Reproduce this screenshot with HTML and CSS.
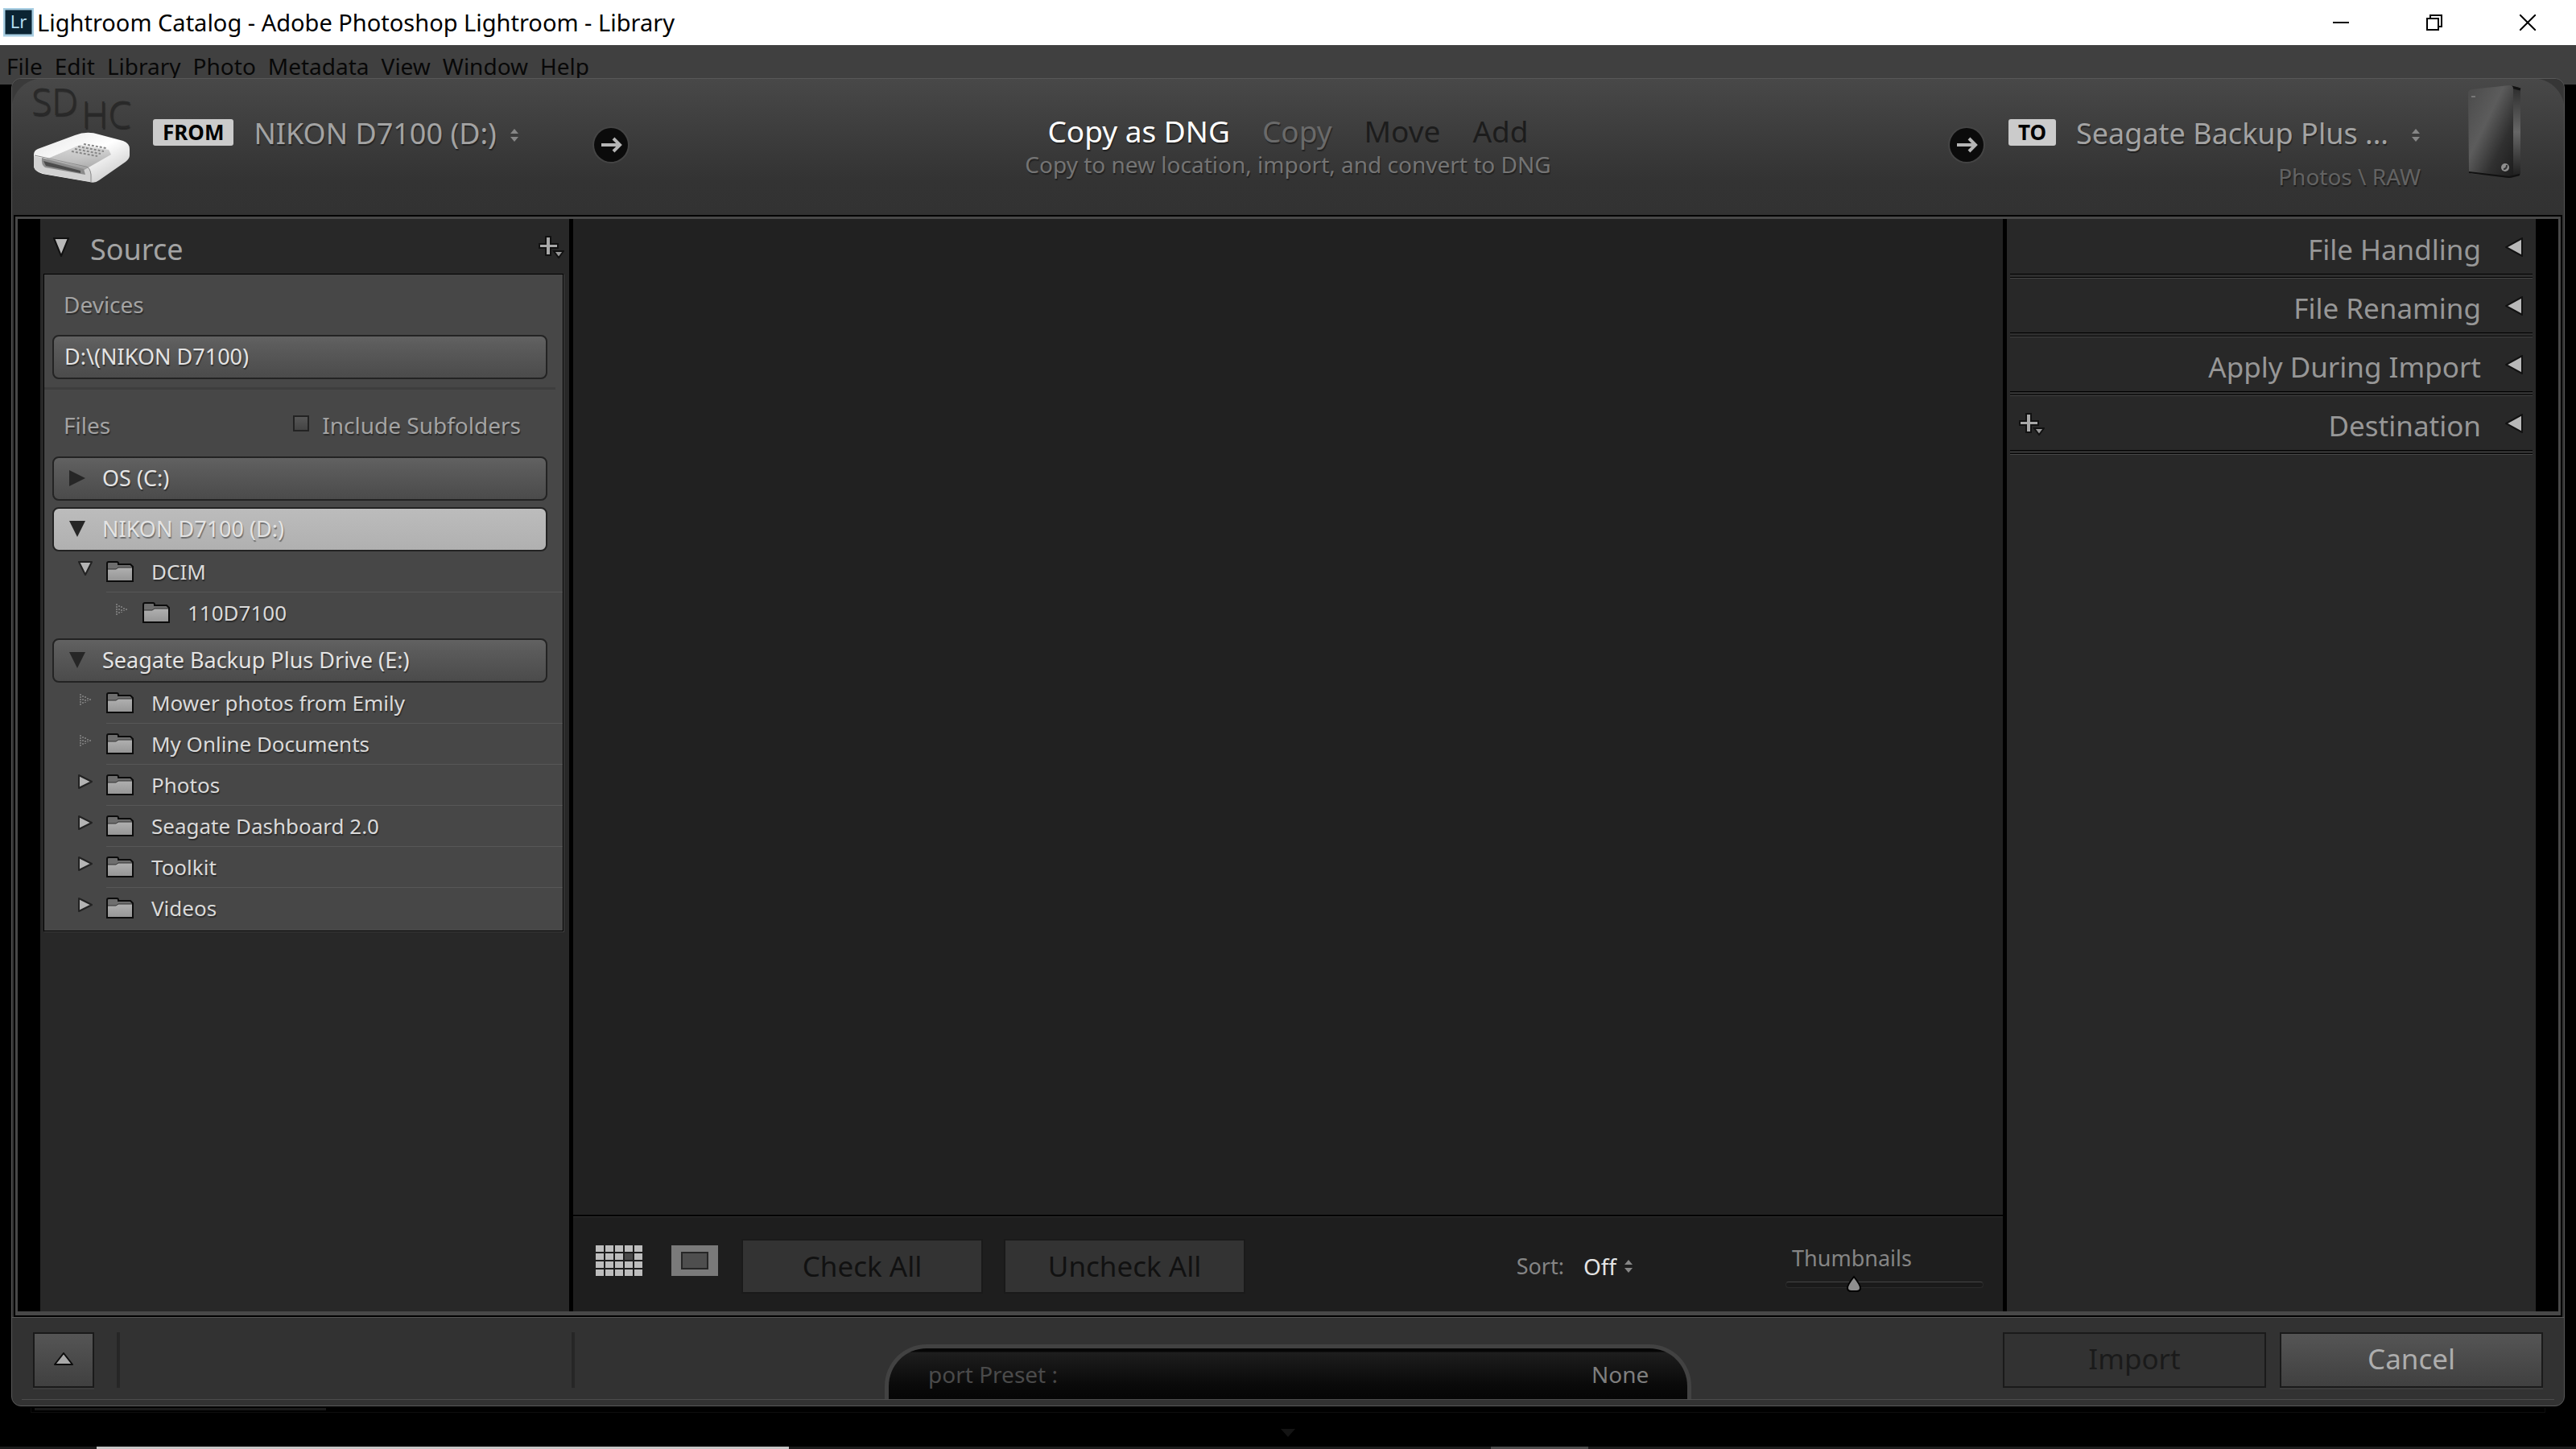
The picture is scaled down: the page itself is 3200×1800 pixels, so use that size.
FILE: index.html
```html
<!DOCTYPE html>
<html lang="en">
<head>
    <meta charset="UTF-8">
    <meta name="viewport" content="width=device-width, initial-scale=1.0">
    <title>Lightroom Catalog - Adobe Photoshop Lightroom - Library</title>
    <link rel="stylesheet" href="styles.css">
</head>
<body>
    <!-- shared icons -->
    <svg class="sprite" width="0" height="0" aria-hidden="true">
        <defs>
            <linearGradient id="folder-fill" x1="0" y1="0" x2="0" y2="1">
                <stop offset="0" stop-color="#b0b0b0"/>
                <stop offset="1" stop-color="#969696"/>
            </linearGradient>
        </defs>
        <symbol id="icon-folder" viewBox="0 0 34 26">
            <path d="M1 25V3q0-2 2-2h10q2 0 2 2v1h15l3 3v18z" fill="#6e6e6e" stroke="#0c0c0c" stroke-width="2"/>
            <path d="M2 24V10h10l3-2h17v16z" fill="url(#folder-fill)"/>
            <path d="M2 10h10l3-2h17" fill="none" stroke="#333" stroke-width="1"/>
        </symbol>
        <symbol id="icon-open" viewBox="0 0 18 18">
            <path d="M1 1h16L9 17z" fill="#b4b4b4" stroke="#222" stroke-width="2" stroke-linejoin="round"/>
        </symbol>
        <symbol id="icon-closed" viewBox="0 0 18 18">
            <path d="M1 1v16l16-8z" fill="#b4b4b4" stroke="#222" stroke-width="2" stroke-linejoin="round"/>
        </symbol>
        <symbol id="icon-empty" viewBox="0 0 18 18">
            <path d="M3 2v14M6 4v2M6 8v2M6 12v2M9 5v2M9 9v4M12 7v4M15 8v2" stroke="#777" stroke-width="2" stroke-dasharray="2 1"/>
        </symbol>
        <symbol id="icon-add" viewBox="0 0 32 28">
            <path d="M9 1h6v9h9v5h-9v9H9v-9H1v-5h8z" fill="#a8a8a8" stroke="#111" stroke-width="2"/>
            <path d="M19 19h12l-6 8z" fill="#989898" stroke="#111" stroke-width="2"/>
        </symbol>
        <symbol id="icon-updown" viewBox="0 0 12 18">
            <path d="M6 1l5 6H1zM6 17l5-6H1z" fill="#868686"/>
        </symbol>
        <symbol id="icon-next" viewBox="0 0 48 48">
            <circle cx="24" cy="24" r="23" fill="#444"/>
            <circle cx="24" cy="24" r="21" fill="#0b0b0b"/>
            <path d="M12 24h22M27 16l8 8-8 8" fill="none" stroke="#b5b5b5" stroke-width="4"/>
        </symbol>
    </svg>

    <header class="titlebar">
        <svg class="app-logo" viewBox="0 0 38 36" aria-hidden="true">
            <rect x="1" y="1" width="36" height="33" fill="#0b2433" stroke="#a9cfe3" stroke-width="3"/>
            <text class="app-logo-text" x="19" y="25" text-anchor="middle">Lr</text>
        </svg>
        <h1 class="title">Lightroom Catalog - Adobe Photoshop Lightroom - Library</h1>
        <div class="window-controls">
            <button type="button" aria-label="Minimize">
                <svg viewBox="0 0 20 20"><path d="M0 10h20" stroke="#000" stroke-width="2"/></svg>
            </button>
            <button type="button" aria-label="Restore">
                <svg viewBox="0 0 20 20"><path d="M1 5h14v14H1zM5 5V1h14v14h-4" fill="none" stroke="#000" stroke-width="2"/></svg>
            </button>
            <button type="button" aria-label="Close">
                <svg viewBox="0 0 20 20"><path d="M0 0l20 20M20 0L0 20" stroke="#000" stroke-width="2"/></svg>
            </button>
        </div>
    </header>

    <nav class="menubar">
        <a href="#">File</a>
        <a href="#">Edit</a>
        <a href="#">Library</a>
        <a href="#">Photo</a>
        <a href="#">Metadata</a>
        <a href="#">View</a>
        <a href="#">Window</a>
        <a href="#">Help</a>
    </nav>

    <main class="dialog">
        <section class="import-header">
            <div class="import-from">
                <svg class="card-icon" viewBox="0 0 121 121" aria-hidden="true">
                    <defs>
                        <linearGradient id="card-top" x1="0" y1="0" x2="1" y2="1">
                            <stop offset="0" stop-color="#e6e6e6"/>
                            <stop offset="0.5" stop-color="#ffffff"/>
                            <stop offset="1" stop-color="#bdbdbd"/>
                        </linearGradient>
                        <linearGradient id="card-face" x1="0" y1="0" x2="0" y2="1">
                            <stop offset="0" stop-color="#c4c4c4"/>
                            <stop offset="1" stop-color="#7c7c7c"/>
                        </linearGradient>
                    </defs>
                    <text class="card-text" x="-2" y="37">SD</text>
                    <text class="card-text" x="60" y="53">HC</text>
                    <path d="M1 86q0-5 5-7l46-17q15-6 30-1l30 8q8 3 8 10v8q0 4-5 8l-33 23q-5 4-12 2L12 110q-10-3-11-9z" fill="url(#card-top)"/>
                    <path d="M1 88l66 14q6 2 7 18l-8-1-52-9q-12-3-13-9z" fill="#d2d2d2"/>
                    <path d="M2 87l64 14q5 1 6 10v9" fill="none" stroke="#8d8d8d" stroke-width="1"/>
                    <path d="M16 92l42-18 36 6 3 6-35 20-45-12z" fill="url(#card-face)" opacity="0.6"/>
                    <path d="M11 90l52 14 2 7-50-9q-5-3-4-12z" fill="#8b8b8b"/>
                    <path d="M13 94l46 12v3l-43-9z" fill="#4c4c4c"/>
                    <path d="M56 76l32 6M52 79l32 6M48 82l32 6M63 73l28 5" stroke="#888" stroke-width="2" stroke-dasharray="3 2"/>
                </svg>
                <label class="badge" for="source-drive">FROM</label>
                <select id="source-drive" class="drive-select">
                    <option>NIKON D7100 (D:)</option>
                </select>
                <svg class="updown" aria-hidden="true"><use href="#icon-updown"/></svg>
                <svg class="next" aria-hidden="true"><use href="#icon-next"/></svg>
            </div>

            <div class="import-mode">
                <div class="mode-tabs">
                    <button type="button" class="mode active">Copy as DNG</button>
                    <button type="button" class="mode">Copy</button>
                    <button type="button" class="mode" disabled>Move</button>
                    <button type="button" class="mode" disabled>Add</button>
                </div>
                <p class="mode-hint">Copy to new location, import, and convert to DNG</p>
            </div>

            <div class="import-to">
                <svg class="next" aria-hidden="true"><use href="#icon-next"/></svg>
                <label class="badge" for="target-drive">TO</label>
                <div class="target">
                    <div class="target-drive">
                        <select id="target-drive" class="drive-select">
                            <option>Seagate Backup Plus ...</option>
                        </select>
                        <svg class="updown" aria-hidden="true"><use href="#icon-updown"/></svg>
                    </div>
                    <p class="target-path">Photos \ RAW</p>
                </div>
                <svg class="disk-icon" viewBox="0 0 68 116" aria-hidden="true">
                    <defs>
                        <linearGradient id="disk-front" x1="0" y1="0" x2="1" y2="1">
                            <stop offset="0" stop-color="#4a4a4a"/>
                            <stop offset="0.4" stop-color="#5c5c5c"/>
                            <stop offset="0.7" stop-color="#303030"/>
                            <stop offset="1" stop-color="#1c1c1c"/>
                        </linearGradient>
                        <linearGradient id="disk-side" x1="0" y1="0" x2="0" y2="1">
                            <stop offset="0" stop-color="#2c2c2c"/>
                            <stop offset="0.5" stop-color="#666"/>
                            <stop offset="1" stop-color="#1c1c1c"/>
                        </linearGradient>
                    </defs>
                    <path d="M52 1l10 1q4 1 4 4v103q0 3-4 4l-8 2z" fill="url(#disk-side)"/>
                    <path d="M55 2l11 3" stroke="#111" stroke-width="3"/>
                    <path d="M1 9q0-3 4-4l47-5q5 0 5 4v107q0 4-5 4l-46-5q-4-1-4-4z" fill="url(#disk-front)"/>
                    <path d="M2 108l50 6 13-3" fill="none" stroke="#111" stroke-width="2"/>
                    <circle cx="47" cy="102" r="5" fill="#8e8e8e"/>
                    <path d="M45 104q4 0 4-5" fill="none" stroke="#333" stroke-width="2"/>
                    <path d="M5 14h5" stroke="#777" stroke-width="2"/>
                </svg>
            </div>
        </section>

        <div class="workspace">
            <aside class="panel source-panel">
                <div class="panel-title">
                    <svg class="panel-arrow" viewBox="0 0 20 24" aria-hidden="true"><path d="M1 1h18l-9 22z" fill="#b8b8b8" stroke="#111" stroke-width="2"/></svg>
                    <h2>Source</h2>
                    <button type="button" class="add-button" aria-label="Add source"><svg><use href="#icon-add"/></svg></button>
                </div>
                <div class="source-body">
                    <h3 class="group-label">Devices</h3>
                    <button type="button" class="drive">D:\(NIKON D7100)</button>
                    <hr class="divider">
                    <div class="files-head">
                        <h3>Files</h3>
                        <label class="subfolders"><input type="checkbox">Include Subfolders</label>
                    </div>
                    <button type="button" class="drive">
                        <svg class="drive-arrow" viewBox="0 0 20 20"><path d="M0 0v20l20-10z" fill="#262626"/></svg>OS (C:)
                    </button>
                    <button type="button" class="drive selected">
                        <svg class="drive-arrow" viewBox="0 0 20 20"><path d="M0 0h20L10 20z" fill="#262626"/></svg>NIKON D7100 (D:)
                    </button>
                    <ul class="folders">
                        <li><svg class="twist"><use href="#icon-open"/></svg><span class="folder"><svg><use href="#icon-folder"/></svg>DCIM</span></li>
                        <li class="nested"><svg class="twist"><use href="#icon-empty"/></svg><span class="folder"><svg><use href="#icon-folder"/></svg>110D7100</span></li>
                    </ul>
                    <button type="button" class="drive">
                        <svg class="drive-arrow" viewBox="0 0 20 20"><path d="M0 0h20L10 20z" fill="#262626"/></svg>Seagate Backup Plus Drive (E:)
                    </button>
                    <ul class="folders">
                        <li><svg class="twist"><use href="#icon-empty"/></svg><span class="folder"><svg><use href="#icon-folder"/></svg>Mower photos from Emily</span></li>
                        <li><svg class="twist"><use href="#icon-empty"/></svg><span class="folder"><svg><use href="#icon-folder"/></svg>My Online Documents</span></li>
                        <li><svg class="twist"><use href="#icon-closed"/></svg><span class="folder"><svg><use href="#icon-folder"/></svg>Photos</span></li>
                        <li><svg class="twist"><use href="#icon-closed"/></svg><span class="folder"><svg><use href="#icon-folder"/></svg>Seagate Dashboard 2.0</span></li>
                        <li><svg class="twist"><use href="#icon-closed"/></svg><span class="folder"><svg><use href="#icon-folder"/></svg>Toolkit</span></li>
                        <li><svg class="twist"><use href="#icon-closed"/></svg><span class="folder"><svg><use href="#icon-folder"/></svg>Videos</span></li>
                    </ul>
                </div>
            </aside>

            <section class="preview">
                <div class="canvas"></div>
                <div class="toolbar">
                    <button type="button" class="view-button" aria-label="Grid view">
                        <svg viewBox="0 0 58 38">
                            <path d="M0 4h58M0 14h58M0 24h58M0 34h58" stroke="#bdbdbd" stroke-width="8" stroke-dasharray="10 2"/>
                            <path d="M36 10h10v8H36z" fill="#4a4a4a"/>
                        </svg>
                    </button>
                    <button type="button" class="view-button" aria-label="Loupe view">
                        <svg viewBox="0 0 58 38">
                            <path d="M0 0h58v38H0z" fill="#7a7a7a"/>
                            <path d="M13 9h32v20H13z" fill="#4e4e4e" stroke="#262626" stroke-width="2"/>
                        </svg>
                    </button>
                    <button type="button" class="check-button" disabled>Check All</button>
                    <button type="button" class="check-button" disabled>Uncheck All</button>
                    <div class="sort">
                        <label for="sort">Sort:</label>
                        <select id="sort">
                            <option>Off</option>
                        </select>
                        <svg class="updown" aria-hidden="true"><use href="#icon-updown"/></svg>
                    </div>
                    <div class="thumbnails">
                        <label for="thumb-size">Thumbnails</label>
                        <input type="range" id="thumb-size" min="0" max="100" value="33">
                    </div>
                </div>
            </section>

            <aside class="panel options-panel">
                <button type="button" class="option">File Handling <svg viewBox="0 0 22 24"><path d="M21 1v22L1 12z" fill="#b8b8b8" stroke="#111" stroke-width="2"/></svg></button>
                <button type="button" class="option">File Renaming <svg viewBox="0 0 22 24"><path d="M21 1v22L1 12z" fill="#b8b8b8" stroke="#111" stroke-width="2"/></svg></button>
                <button type="button" class="option">Apply During Import <svg viewBox="0 0 22 24"><path d="M21 1v22L1 12z" fill="#b8b8b8" stroke="#111" stroke-width="2"/></svg></button>
                <div class="option-row">
                    <button type="button" class="add-button" aria-label="Add destination"><svg><use href="#icon-add"/></svg></button>
                    <button type="button" class="option">Destination <svg viewBox="0 0 22 24"><path d="M21 1v22L1 12z" fill="#b8b8b8" stroke="#111" stroke-width="2"/></svg></button>
                </div>
            </aside>
        </div>

        <footer class="import-footer">
            <div class="footer-left">
                <button type="button" class="action collapse" aria-label="Show fewer options">
                    <svg viewBox="0 0 26 16"><path d="M13 1l11 14H2z" fill="#a8a8a8" stroke="#0c0c0c" stroke-width="2" stroke-linejoin="round"/></svg>
                </button>
                <div class="status"></div>
            </div>
            <div class="preset">
                <label for="preset"><span>Import Preset :</span></label>
                <select id="preset">
                    <option>None</option>
                </select>
            </div>
            <div class="footer-right">
                <button type="button" class="action" disabled>Import</button>
                <button type="button" class="action">Cancel</button>
            </div>
        </footer>
    </main>

    <div class="filmstrip">
        <div class="filmstrip-tab"></div>
        <svg class="filmstrip-arrow" viewBox="0 0 18 10" aria-hidden="true"><path d="M0 0h18L9 10z" fill="#141414"/></svg>
    </div>
    <div class="taskbar"></div>
</body>
</html>
```

FILE: styles.css
```css
:root {
    --text: #a3a3a3;
    --text-bright: #e4e4e4;
    --text-dim: #747474;
    --panel: #282828;
    --frame: #484848;
    --surface: #323232;
}

* {
    box-sizing: border-box;
}

body {
    display: flex;
    flex-direction: column;
    min-height: 100vh;
    margin: 0;
    background: #000;
    color: var(--text);
    font-family: "Noto Sans", "Open Sans", sans-serif;
    font-size: 27px;
    line-height: 36px;
}

h1, h2, h3, p, ul {
    margin: 0;
    padding: 0;
    font-size: inherit;
    font-weight: normal;
}

button, select, input {
    margin: 0;
    padding: 0;
    border: 0;
    background: none;
    color: inherit;
    font: inherit;
    appearance: none;
}

svg {
    display: block;
    flex: none;
}

.sprite {
    position: absolute;
}

/* window chrome */
.titlebar {
    display: flex;
    align-items: center;
    height: 56px;
    padding: 0 2px 0 4px;
    background: #fff;
    color: #000;
    font-size: 29px;
}

.app-logo {
    width: 38px;
    height: 36px;
    margin-right: 4px;
}

.app-logo-text {
    fill: #b4dcf0;
    font-size: 22px;
}

.window-controls {
    display: flex;
    height: 100%;
    margin-left: auto;
}

.window-controls button {
    width: 116px;
}

.window-controls svg {
    width: 20px;
    height: 20px;
    margin: 0 auto;
}

.menubar {
    display: flex;
    gap: 15px;
    height: 49px;
    padding: 8px;
    background: #404040;
    font-size: 28px;
}

.menubar a {
    color: #080808;
    text-decoration: none;
}

/* import dialog */
.dialog {
    display: flex;
    flex: 1;
    flex-direction: column;
    margin: -8px 14px 0;
    border: 1px solid #585858;
    border-radius: 12px;
    background: var(--surface);
}

.import-header {
    display: grid;
    grid-template-columns: 1fr auto 1fr;
    height: 169px;
    border-radius: 12px 12px 0 0;
    background:
        radial-gradient(circle at 100% 100%, transparent 38px, #3a3a3a 39px) 0 0 / 38px 38px no-repeat,
        radial-gradient(circle at 0 100%, transparent 38px, #363636 39px) 100% 0 / 38px 38px no-repeat,
        linear-gradient(#484848, #333 75%, #323232);
    text-shadow: 1px 2px 1px rgba(0, 0, 0, 0.4);
}

.import-from,
.import-to {
    display: flex;
    align-items: flex-start;
    padding-top: 42px;
}

.import-from {
    padding-left: 26px;
}

.card-icon {
    width: 121px;
    height: 121px;
    margin-top: -34px;
    overflow: visible;
}

.card-text {
    fill: #292929;
    font-size: 46px;
    font-weight: 300;
}

.badge {
    height: 33px;
    margin: 8px 25px 0 28px;
    padding: 0 12px;
    border-radius: 3px;
    background: #cbcbcb;
    color: #000;
    font-size: 26px;
    font-weight: bold;
    line-height: 33px;
    text-shadow: none;
}

.drive-select {
    height: 51px;
    font-size: 36px;
    line-height: 51px;
    text-shadow: inherit;
}

.updown {
    width: 12px;
    height: 18px;
}

.import-header .updown {
    margin: 19px 0 0 16px;
}

.next {
    width: 48px;
    height: 48px;
    margin-top: 16px;
}

.import-from .next {
    margin-left: 90px;
}

.import-mode {
    padding-top: 39px;
    text-align: center;
}

.mode-tabs {
    display: flex;
    gap: 40px;
    justify-content: center;
}

.mode {
    color: #6a6a6a;
    font-size: 37px;
    line-height: 52px;
    text-shadow: inherit;
}

.mode.active {
    color: #fff;
}

.mode:disabled {
    color: #1c1c1c;
    text-shadow: none;
}

.mode-hint {
    color: var(--text-dim);
    font-size: 28px;
    line-height: 30px;
}

.import-to {
    justify-content: flex-end;
    padding-right: 52px;
}

.target-drive {
    display: flex;
}

.target-path {
    color: #636363;
    font-size: 28px;
    line-height: 56px;
    text-align: right;
}

.import-to .updown {
    margin-left: 28px;
}

.disk-icon {
    width: 68px;
    height: 116px;
    margin: -34px 0 0 58px;
}

/* workspace */
.workspace {
    display: grid;
    flex: 1;
    grid-template-columns: 657px 1fr 657px;
    gap: 5px;
    margin: 2px 4px;
    padding: 0 28px;
    border: 3px solid var(--frame);
    border-bottom-width: 5px;
    background: #000;
    box-shadow: 0 0 0 2px #000;
}

.panel {
    background: var(--panel);
}

.panel-title {
    display: flex;
    align-items: center;
    height: 68px;
    padding: 8px 6px 0 16px;
    font-size: 36px;
}

.panel-arrow {
    width: 20px;
    height: 24px;
    margin: 0 26px 6px 0;
}

.add-button svg {
    width: 32px;
    height: 28px;
}

.panel-title .add-button {
    margin: 0 0 6px auto;
}

.source-body {
    margin: 0 7px 0 4px;
    padding-bottom: 2px;
    border: 1px solid #000;
    background: #474747;
    box-shadow: 1px 1px 0 #404040;
    text-shadow: 1px 2px 1px rgba(0, 0, 0, 0.4);
}

.group-label {
    padding: 19px 24px 20px;
    font-size: 28px;
}

.drive {
    display: flex;
    align-items: center;
    width: calc(100% - 29px);
    height: 55px;
    margin: 0 19px 8px 10px;
    padding: 0 13px 1px;
    border: 2px solid #232323;
    border-radius: 8px;
    background: linear-gradient(#626262, #5c5c5c 20%, #4b4b4b);
    color: var(--text-bright);
    text-shadow: inherit;
}

.drive.selected {
    background: linear-gradient(#bcbcbc, #b0b0b0);
}

.drive-arrow {
    width: 20px;
    height: 20px;
    margin: 0 21px 0 6px;
}

.divider {
    height: 3px;
    margin: 10px 9px 0 0;
    border: 0;
    background: #3e3e3e;
}

.files-head {
    display: flex;
    justify-content: space-between;
    padding: 26px 52px 21px 24px;
    font-size: 28px;
}

.subfolders {
    display: flex;
    align-items: center;
}

.subfolders input {
    width: 20px;
    height: 20px;
    margin: 0 16px 4px 0;
    border: 2px solid #232323;
    background: linear-gradient(#575757, #444);
}

.folders {
    margin-top: -8px;
    color: #dadada;
    font-size: 26px;
    list-style: none;
}

.folders:not(:last-child) {
    margin-bottom: 6px;
}

.folders li {
    display: flex;
    padding-left: 42px;
}

.folders .nested {
    padding-left: 87px;
}

.twist {
    width: 18px;
    height: 18px;
    margin: 12px 17px 0 0;
}

.folder {
    display: flex;
    flex: 1;
    gap: 22px;
    align-items: center;
    height: 51px;
    border-bottom: 1px solid #575757;
}

.folders li:last-child .folder {
    border-bottom-color: transparent;
}

.folder svg {
    width: 34px;
    height: 26px;
}

.preview {
    display: flex;
    flex-direction: column;
}

.canvas {
    flex: 1;
    background: #212121;
}

.toolbar {
    display: flex;
    align-items: center;
    height: 120px;
    padding: 6px 24px 0 28px;
    border-top: 2px solid #000;
    background: #1e1e1e;
    box-shadow: inset 0 1px 0 #2e2e2e;
}

.view-button {
    margin: 0 36px 14px 0;
}

.view-button svg {
    width: 58px;
    height: 38px;
}

.check-button {
    width: 300px;
    height: 68px;
    margin-right: 26px;
    border: 2px solid #1a1a1a;
    background: #333;
    color: #111;
    font-size: 35px;
}

.view-button + .check-button {
    margin-left: -7px;
}

.sort {
    display: flex;
    gap: 8px;
    align-items: center;
    margin-left: auto;
    color: #858585;
}

.sort select {
    margin-left: 16px;
    color: var(--text-bright);
    font-size: 28px;
}

.thumbnails {
    display: flex;
    flex-direction: column;
    gap: 4px;
    width: 246px;
    margin: 6px 0 0 189px;
    color: #858585;
}

.thumbnails label {
    padding-left: 8px;
}

.thumbnails input {
    height: 22px;
}

.thumbnails input::-webkit-slider-runnable-track {
    height: 8px;
    border: 1px solid #2a2a2a;
    border-top: 1px solid #444;
    border-radius: 4px;
    background: #1a1a1a;
}

.thumbnails input::-webkit-slider-thumb {
    width: 22px;
    height: 22px;
    margin-top: -9px;
    background: url("data:image/svg+xml,%3Csvg xmlns='http://www.w3.org/2000/svg' viewBox='0 0 22 22'%3E%3Cpath d='M11 2q8 10 8 14 0 4-5 4H8q-5 0-5-4 0-4 8-14z' fill='%238e8e8e' stroke='%23000' stroke-width='2'/%3E%3C/svg%3E") no-repeat;
    appearance: none;
}

.option {
    display: flex;
    flex: 1;
    align-items: center;
    justify-content: flex-end;
    width: 100%;
    height: 73px;
    padding: 4px 12px 0 0;
    color: #979797;
    font-size: 35px;
}

.option svg {
    width: 22px;
    height: 24px;
    margin: 0 0 7px 30px;
}

/* black groove under every collapsed panel */
.options-panel > * {
    width: calc(100% - 8px);
    margin: 0 4px;
    border-bottom: 1px solid #000;
    box-shadow: 0 1px 0 #484848, inset 0 -3px 0 #2e2e2e, inset 0 -4px 0 #000;
}

.option-row {
    display: flex;
    align-items: center;
    height: 73px;
    padding-left: 11px;
}

/* footer */
.import-footer {
    display: flex;
    height: 110px;
    padding: 0 26px 0 26px;
    border-top: 1px solid #555;
    background: linear-gradient(#4c4c4c, #4c4c4c) 12px 101px / calc(100% - 24px) 1px no-repeat;
}

.footer-left,
.footer-right {
    display: flex;
    flex: 1;
    padding-top: 18px;
}

.footer-right {
    gap: 17px;
    justify-content: flex-end;
}

.action {
    width: 327px;
    height: 69px;
    padding-bottom: 3px;
    border: 2px solid #1a1a1a;
    background: linear-gradient(#555, #404040);
    box-shadow: 0 2px 0 #3c3c3c;
    color: #adadad;
    font-size: 35px;
}

.action:disabled {
    background: var(--surface);
    box-shadow: none;
    color: #1a1a1a;
}

.action.collapse {
    width: 76px;
}

.collapse svg {
    width: 26px;
    height: 16px;
    margin: 0 auto;
}

.status {
    width: 569px;
    height: 69px;
    margin-left: 28px;
    border: 4px solid #262626;
    border-width: 0 4px;
}

.preset {
    display: flex;
    align-items: center;
    justify-content: space-between;
    width: 1002px;
    height: 68px;
    margin-top: 33px;
    padding: 0 47px 0 50px;
    border: 5px solid #424242;
    border-bottom: 0;
    border-radius: 52px 52px 0 0;
    background: linear-gradient(#060606 4px, #1e1e1e 5px, #0a0a0a 70%, #060606);
    color: #4a4a4a;
    font-size: 28px;
}

.preset label {
    display: flex;
    justify-content: flex-end;
    width: 160px;
    overflow: hidden;
    white-space: nowrap;
}

.preset select {
    color: #7e7e7e;
}

/* bottom of the screen */
.filmstrip {
    height: 50px;
    padding: 2px 38px 0;
}

.filmstrip-tab {
    height: 6px;
    border: 1px solid #0e0e0e;
    border-top: 0;
    background: linear-gradient(#1a1a1a, #1a1a1a) 4px 0 / 362px 3px no-repeat;
}

.filmstrip-arrow {
    width: 18px;
    height: 10px;
    margin: 20px auto 0;
}

.taskbar {
    height: 3px;
    background: linear-gradient(90deg, #1a1a1a 120px, #c4c4c4 120px 980px, #1a1a1a 980px 1852px, #4a4a4a 1852px 1973px, #1a1a1a 1973px);
}
```
